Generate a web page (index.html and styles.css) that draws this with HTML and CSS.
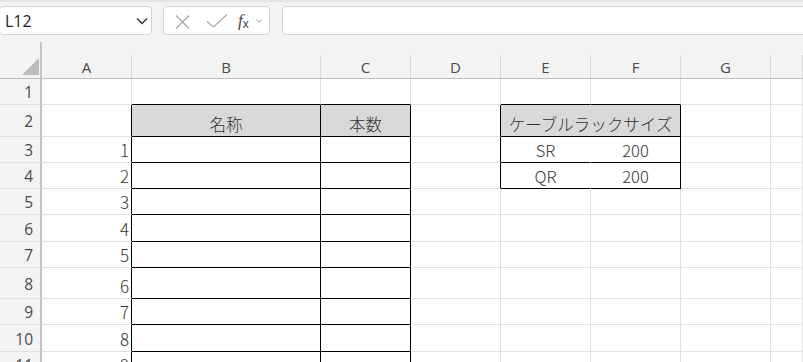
FILE: index.html
```html
<!DOCTYPE html>
<html lang="ja">
<head>
<meta charset="utf-8">
<title>Sheet</title>
<link rel="stylesheet" href="styles.css">
</head>
<body>
<div class="app">
  <div class="toolbar">
    <div class="namebox">
      <span class="nb-text">L12</span>
      <svg class="nb-chev" width="12" height="8" viewBox="0 0 12 8"><path d="M1 1.5 L6 6.5 L11 1.5" fill="none" stroke="#333" stroke-width="1.4"/></svg>
    </div>
    <div class="fxbox">
      <svg class="ic-x" width="15" height="14" viewBox="0 0 15 14"><path d="M1 0.5 L14 13.5 M14 0.5 L1 13.5" fill="none" stroke="#a8a8a8" stroke-width="1.2"/></svg>
      <svg class="ic-check" width="22" height="14" viewBox="0 0 22 14"><path d="M1 7.5 L7.5 13 L21 0.5" fill="none" stroke="#a8a8a8" stroke-width="1.2"/></svg>
      <span class="fx"><i>f</i><sub>x</sub></span>
      <svg class="ic-small" width="6" height="4" viewBox="0 0 6 4"><path d="M0.5 0.5 L3 3.2 L5.5 0.5" fill="none" stroke="#9a9a9a" stroke-width="1"/></svg>
    </div>
    <div class="formula"></div>
  </div>

  <div class="sheet">
    <div class="row hdr">
      <div class="corner"><span class="tri"></span></div>
      <div class="ch"><span class="lab">A</span></div>
      <div class="ch"><span class="lab">B</span></div>
      <div class="ch"><span class="lab">C</span></div>
      <div class="ch"><span class="lab">D</span></div>
      <div class="ch"><span class="lab">E</span></div>
      <div class="ch"><span class="lab">F</span></div>
      <div class="ch"><span class="lab">G</span></div>
      <div class="ch"><span class="lab"></span></div>
    </div>

    <div class="row h26">
      <div class="rh">1</div>
      <div class="c"></div><div class="c bb"></div><div class="c bb"></div><div class="c"></div>
      <div class="c bb"></div><div class="c bb"></div><div class="c"></div><div class="c"></div>
    </div>

    <div class="row h32">
      <div class="rh">2</div>
      <div class="c br"></div>
      <div class="c bb br hd ctr">名称</div>
      <div class="c bb br hd ctr">本数</div>
      <div class="c br"></div>
      <div class="c bb br hd ctr span2">ケーブルラックサイズ</div>
      <div class="c"></div><div class="c"></div>
    </div>

    <div class="row h26">
      <div class="rh">3</div>
      <div class="c br num">1</div>
      <div class="c bb br"></div><div class="c bb br"></div><div class="c br"></div>
      <div class="c bb nr ctr">SR</div><div class="c bb br ctr">200</div>
      <div class="c"></div><div class="c"></div>
    </div>

    <div class="row h26">
      <div class="rh">4</div>
      <div class="c br num">2</div>
      <div class="c bb br"></div><div class="c bb br"></div><div class="c br"></div>
      <div class="c bb nr ctr">QR</div><div class="c bb br ctr">200</div>
      <div class="c"></div><div class="c"></div>
    </div>

    <div class="row h26">
      <div class="rh">5</div>
      <div class="c br num">3</div>
      <div class="c bb br"></div><div class="c bb br"></div>
      <div class="c"></div><div class="c"></div><div class="c"></div><div class="c"></div><div class="c"></div>
    </div>

    <div class="row h27">
      <div class="rh">6</div>
      <div class="c br num">4</div>
      <div class="c bb br"></div><div class="c bb br"></div>
      <div class="c"></div><div class="c"></div><div class="c"></div><div class="c"></div><div class="c"></div>
    </div>

    <div class="row h26">
      <div class="rh">7</div>
      <div class="c br num">5</div>
      <div class="c bb br"></div><div class="c bb br"></div>
      <div class="c"></div><div class="c"></div><div class="c"></div><div class="c"></div><div class="c"></div>
    </div>

    <div class="row h31">
      <div class="rh">8</div>
      <div class="c br num">6</div>
      <div class="c bb br"></div><div class="c bb br"></div>
      <div class="c"></div><div class="c"></div><div class="c"></div><div class="c"></div><div class="c"></div>
    </div>

    <div class="row h26">
      <div class="rh">9</div>
      <div class="c br num">7</div>
      <div class="c bb br"></div><div class="c bb br"></div>
      <div class="c"></div><div class="c"></div><div class="c"></div><div class="c"></div><div class="c"></div>
    </div>

    <div class="row h27">
      <div class="rh">10</div>
      <div class="c br num">8</div>
      <div class="c bb br"></div><div class="c bb br"></div>
      <div class="c"></div><div class="c"></div><div class="c"></div><div class="c"></div><div class="c"></div>
    </div>

    <div class="row h26">
      <div class="rh">11</div>
      <div class="c br num">9</div>
      <div class="c bb br"></div><div class="c bb br"></div>
      <div class="c"></div><div class="c"></div><div class="c"></div><div class="c"></div><div class="c"></div>
    </div>
  </div>
</div>
</body>
</html>
```

FILE: styles.css
```css
* { box-sizing: border-box; }

html, body {
  margin: 0;
  padding: 0;
  width: 803px;
  height: 362px;
  overflow: hidden;
  background: #f3f3f3;
}

.app {
  width: 803px;
  height: 362px;
  overflow: hidden;
  font-family: "Open Sans", "Noto Sans", sans-serif;
}

/* ---------- toolbar ---------- */
.toolbar {
  height: 42px;
  display: flex;
  align-items: flex-start;
  padding-top: 4px;
  border-top: 2px solid #e4e4e4;
  background: #f3f3f3;
}

.namebox {
  margin-left: -1px;
  width: 153px;
  height: 29px;
  background: #fff;
  border: 1px solid #d4d4d4;
  border-radius: 4px;
  display: flex;
  align-items: center;
  justify-content: space-between;
  padding: 0 3px 0 5px;
}

.nb-text {
  font-size: 16px;
  color: #222;
}

.fxbox {
  margin-left: 11px;
  width: 107px;
  height: 29px;
  background: #fff;
  border: 1px solid #d4d4d4;
  border-radius: 4px;
  display: flex;
  align-items: center;
  padding-left: 11px;
}

.ic-x { margin-top: 2px; }
.ic-check { margin-left: 16px; }

.fx {
  margin-left: 10px;
  font-family: "Liberation Serif", serif;
  font-size: 17px;
  color: #444;
  line-height: 1;
  display: flex;
  align-items: baseline;
}
.fx i { font-style: italic; }
.fx sub {
  font-family: "Liberation Sans", sans-serif;
  font-size: 12px;
  vertical-align: baseline;
  position: relative;
  top: 2px;
}

.ic-small { margin-left: 7px; }

.formula {
  margin-left: 12px;
  flex: 1;
  margin-right: -20px;
  height: 29px;
  background: #fff;
  border: 1px solid #d4d4d4;
  border-radius: 4px;
}

/* ---------- sheet ---------- */
.sheet {
  background: #fff;
}

.row {
  display: grid;
  grid-template-columns: 42px 90px 189px 90px 90px 90px 90px 90px 1fr;
}

.hdr {
  height: 37px;
  background: #f3f3f3;
  border-bottom: 1px solid #bdbdbd;
}

.corner {
  border-right: 2px solid #c4c4c4;
  display: flex;
  align-items: flex-end;
  justify-content: flex-end;
  padding: 0 1px 3px 0;
}

.tri {
  width: 17px;
  height: 17px;
  background: #bcbcbc;
  clip-path: polygon(100% 0, 100% 100%, 0 100%);
}

.ch {
  padding-top: 13px;
  display: flex;
}

.lab {
  flex: 1;
  border-right: 1px solid #d9d9d9;
  display: flex;
  align-items: center;
  justify-content: center;
  font-size: 15px;
  color: #4a4a4a;
  padding-top: 1px;
}

.h26 { height: 26px; }
.h27 { height: 27px; }
.h31 { height: 31px; }
.h32 { height: 32px; }

.rh {
  background: #f3f3f3;
  border-right: 2px solid #c4c4c4;
  border-bottom: 1px solid #e0e0e0;
  display: flex;
  align-items: center;
  justify-content: flex-end;
  padding-right: 7px;
  font-size: 15.5px;
  color: #4a4a4a;
  padding-top: 1px;
}

.c {
  background: #fff;
  border-right: 1px solid #e1e1e1;
  border-bottom: 1px solid #e1e1e1;
  display: flex;
  align-items: flex-end;
  font-family: "Noto Sans CJK JP", sans-serif;
  font-weight: 300;
  font-size: 16.5px;
  line-height: 20px;
  color: #333;
  padding-bottom: 2px;
  white-space: nowrap;
}

.num { justify-content: flex-end; padding-right: 2px; font-size: 17px; }

.bb { border-bottom-color: #000; }
.br { border-right-color: #000; }
.nr { border-right-color: #fff; }

.hd { background: #d9d9d9; }

.ctr { justify-content: center; }

.span2 { grid-column: span 2; }
```
